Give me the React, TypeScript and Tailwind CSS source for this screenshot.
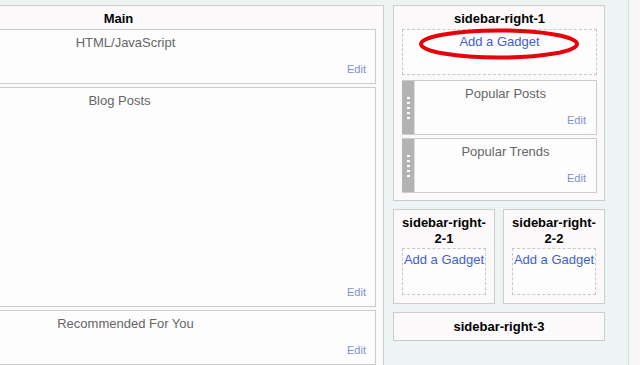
import React from "react";

function Widget({ title, h, titleExtra = "" }: { title: string; h: string; titleExtra?: string }) {
  return (
    <div className={`flex flex-col justify-between border border-[#cccccc] bg-[#fdfdfd] pt-[5px] pb-[7px] ${h}`}>
      <div className={`text-center text-[13px] leading-[16px] text-[#666666] ${titleExtra}`}>{title}</div>
      <div className="pr-[9px] text-right text-[11px] leading-[14px] text-[#7d8fd0]">Edit</div>
    </div>
  );
}

function Gadget({ title }: { title: string }) {
  return (
    <div className="flex h-[55px] border-y border-r border-[#cccccc] bg-[#fdfdfd]">
      <div className="flex w-[12px] shrink-0 flex-col items-center justify-center gap-[3px] bg-[#b3b3b3]">
        <div className="h-[2px] w-[3px] bg-white" />
        <div className="h-[2px] w-[3px] bg-white" />
        <div className="h-[2px] w-[3px] bg-white" />
        <div className="h-[2px] w-[3px] bg-white" />
        <div className="h-[2px] w-[3px] bg-white" />
      </div>
      <div className="flex flex-1 flex-col justify-between border-l border-[#dddddd] pt-[5px] pb-[7px]">
        <div className="text-center text-[13px] leading-[16px] text-[#666666]">{title}</div>
        <div className="pr-[10px] text-right text-[11px] leading-[14px] text-[#7d8fd0]">Edit</div>
      </div>
    </div>
  );
}

function SmallSection({ num }: { num: string }) {
  return (
    <div className="flex h-[95px] w-[102px] flex-col border border-[#cccccc] bg-[#fbf9f9] pt-[5px] pb-[8px]">
      <div className="text-center text-[13px] font-bold leading-[16px] text-black">
        sidebar-right-
        <br />
        {num}
      </div>
      <div className="mx-[8px] mt-[1px] h-[47px] border border-dashed border-[#c8c8c8] bg-[#fdfdfd] pt-[3px] text-center text-[13px] leading-[16px] text-[#3d5fd5]">
        Add a Gadget
      </div>
    </div>
  );
}

export default function App() {
  return (
    <div className="flex h-[365px] w-[640px] overflow-hidden bg-[#f4f7f6] font-['Liberation_Sans',Arial,sans-serif]">
      <div className="flex h-full shrink-0 bg-[#ecf5f3] pt-[5px]">
        <div className="-ml-[147px] flex h-[420px] w-[531px] shrink-0 flex-col gap-[3px] border border-[#cccccc] bg-[#fbf9f9] pt-[4px] pr-[7px] pl-[21px]">
          <div className="-mb-[3px] h-[19px] pl-[-21px] text-center text-[13px] font-bold leading-[18px] text-black">
            <span className="relative -left-[7px]">Main</span>
          </div>
          <Widget title="HTML/JavaScript" h="h-[55px]" />
          <Widget title="Blog Posts" h="h-[220px]" titleExtra="pr-[12px]" />
          <Widget title="Recommended For You" h="h-[55px]" />
        </div>
      </div>
      <div className="flex h-full w-[245px] shrink-0 flex-col border-r border-[#d6dcdb] bg-[#ecf5f3] pt-[5px] pl-[9px]">
        <div className="relative flex h-[196px] w-[212px] flex-col border border-[#cccccc] bg-[#fbf9f9] pt-[4px] pr-[7px] pb-[7px] pl-[8px]">
          <div className="h-[19px] text-center text-[13px] font-bold leading-[18px] text-black">sidebar-right-1</div>
          <div className="h-[46px] border border-dashed border-[#c8c8c8] bg-[#fdfdfd] pt-[4px] text-center text-[13px] leading-[16px] text-[#3d5fd5]">
            Add a Gadget
          </div>
          <div className="mt-[5px]">
            <Gadget title="Popular Posts" />
          </div>
          <div className="mt-[3px]">
            <Gadget title="Popular Trends" />
          </div>
          <svg className="absolute top-[20px] left-[23px]" width="164" height="36" viewBox="0 0 164 36">
            <ellipse cx="82" cy="18" rx="78" ry="13.5" fill="none" stroke="#e8000b" strokeWidth="4" />
          </svg>
        </div>
        <div className="mt-[8px] flex w-[212px] gap-[8px]">
          <SmallSection num="2-1" />
          <SmallSection num="2-2" />
        </div>
        <div className="mt-[8px] h-[29px] w-[212px] border border-[#cccccc] bg-[#fbf9f9] pt-[6px] text-center text-[13px] font-bold leading-[16px] text-black">
          sidebar-right-3
        </div>
      </div>
    </div>
  );
}
